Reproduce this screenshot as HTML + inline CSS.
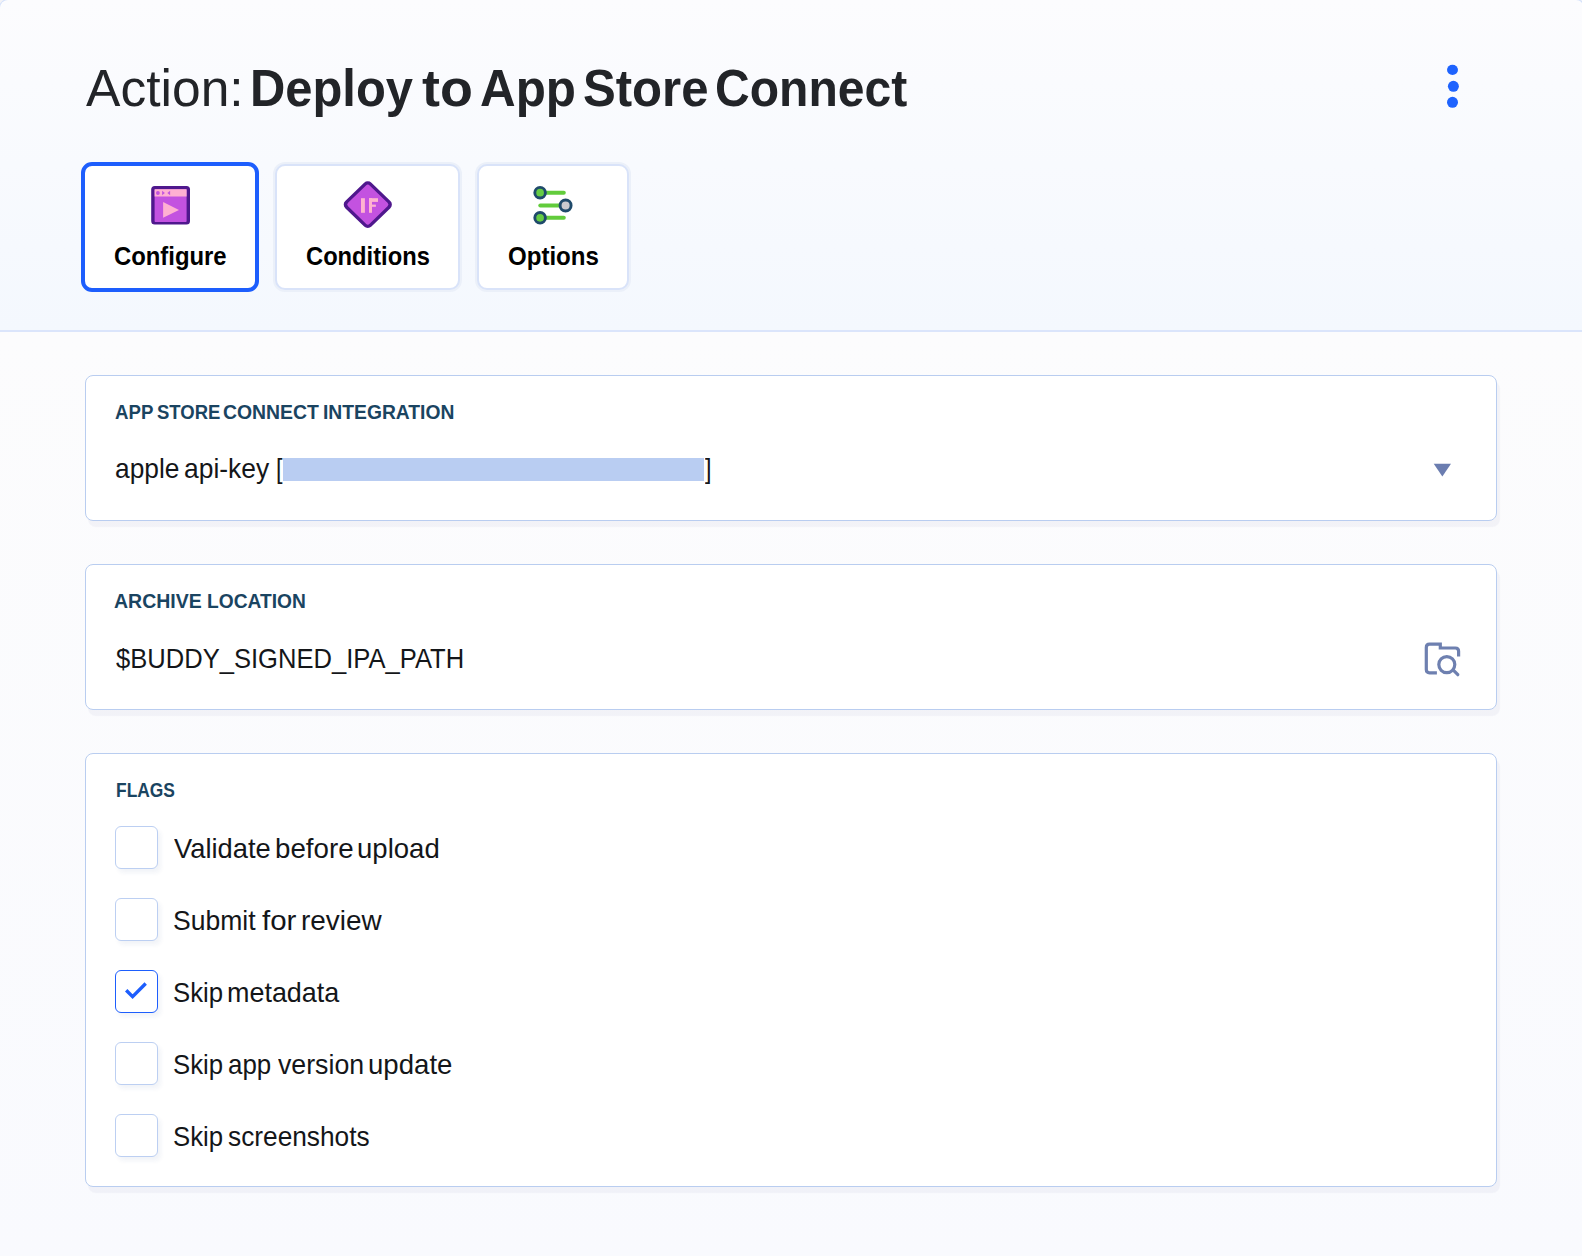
<!DOCTYPE html>
<html><head><meta charset="utf-8">
<style>
html,body{margin:0;padding:0;}
body{width:1582px;height:1256px;overflow:hidden;position:relative;background:#f3f3f6;font-family:"Liberation Sans",sans-serif;}
.abs{position:absolute;white-space:nowrap;transform-origin:0 0;}
#header{position:absolute;left:-1px;top:-1.5px;width:1584px;height:330px;box-sizing:content-box;background:linear-gradient(#fcfcfe,#f4f8fe);border:1.5px solid #d3e0fb;border-bottom:2px solid #dbe5fb;border-radius:9px 9px 0 0;}
#content{position:absolute;left:0;top:332px;width:1582px;height:924px;background:linear-gradient(#fcfcfd,#f9fafe);}
.title{font-size:52px;line-height:52px;color:#222428;}
.tab{position:absolute;box-sizing:border-box;background:#fff;border-radius:11px;}
.tab.sel{border:4px solid #1d5efd;}
.tab.un{border:2px solid #d9e3f9;box-shadow:0 0 0 2px #ebf0f9;border-radius:10px;}
.tablbl{font-weight:bold;font-size:26.5px;line-height:26.5px;color:#000;}
.card{position:absolute;left:85px;width:1412px;box-sizing:border-box;background:#fff;border:1px solid #b9cdf0;border-radius:8px;box-shadow:3px 6px 1px rgba(40,50,110,0.045);}
.lbl{font-weight:bold;font-size:20.5px;line-height:20.5px;color:#1a4461;}
.val{font-size:28px;line-height:28px;color:#141619;}
.cb{position:absolute;left:115px;width:43px;height:43px;box-sizing:border-box;border:1px solid #bccff2;border-radius:6px;background:#fff;box-shadow:3px 4px 4px rgba(40,60,130,0.06);}
.cb.on{border:1.3px solid #1d5efd;}
svg{position:absolute;left:0;top:0;}
</style></head>
<body>
<div id="header"></div>
<div id="content"></div>



<div class="tab sel" style="left:81px;top:162px;width:178px;height:130px"></div>
<div class="tab un" style="left:275px;top:164px;width:185px;height:126px"></div>
<div class="tab un" style="left:477px;top:164px;width:152px;height:126px"></div>


<div class="card" style="top:375px;height:146px"></div>
<div class="card" style="top:564px;height:146px"></div>
<div class="card" style="top:753px;height:434px"></div>

<div class="abs" style="left:283px;top:458px;width:421px;height:23px;background:#b9cdf2"></div>


<div class="cb" style="top:826px"></div>
<div class="cb" style="top:898px"></div>
<div class="cb on" style="top:970px"></div>
<div class="cb" style="top:1042px"></div>
<div class="cb" style="top:1114px"></div>

<!--TEXT-->
<div class="abs title" style="left:86.00px;top:62px;transform:scaleX(0.9916)">Action:</div>
<div class="abs title" style="left:250.28px;top:62px;font-weight:bold;transform:scaleX(0.9400)">Deploy</div>
<div class="abs title" style="left:421.97px;top:62px;font-weight:bold;transform:scaleX(1.0348)">to</div>
<div class="abs title" style="left:479.75px;top:62px;font-weight:bold;transform:scaleX(0.9490)">App</div>
<div class="abs title" style="left:583.11px;top:62px;font-weight:bold;transform:scaleX(0.9442)">Store</div>
<div class="abs title" style="left:715.15px;top:62px;font-weight:bold;transform:scaleX(0.9239)">Connect</div>
<div class="abs tablbl" style="left:114.20px;top:243px;transform:scaleX(0.9000)">Configure</div>
<div class="abs tablbl" style="left:305.61px;top:243px;transform:scaleX(0.8949)">Conditions</div>
<div class="abs tablbl" style="left:507.59px;top:243px;transform:scaleX(0.9082)">Options</div>
<div class="abs lbl" style="left:114.79px;top:402px;transform:scaleX(0.9098)">APP</div>
<div class="abs lbl" style="left:157.20px;top:402px;transform:scaleX(0.9015)">STORE</div>
<div class="abs lbl" style="left:223.15px;top:402px;transform:scaleX(0.9460)">CONNECT</div>
<div class="abs lbl" style="left:323.26px;top:402px;transform:scaleX(0.9406)">INTEGRATION</div>
<div class="abs val" style="left:114.76px;top:455px;transform:scaleX(0.9394)">apple</div>
<div class="abs val" style="left:184.36px;top:455px;transform:scaleX(0.9438)">api-key</div>
<div class="abs val" style="left:275.53px;top:455px;transform:scaleX(0.8333)">[</div>
<div class="abs val" style="left:704.80px;top:455px;transform:scaleX(0.8333)">]</div>
<div class="abs lbl" style="left:114.35px;top:591px;transform:scaleX(0.9500)">ARCHIVE</div>
<div class="abs lbl" style="left:206.66px;top:591px;transform:scaleX(0.9359)">LOCATION</div>
<div class="abs val" style="left:115.50px;top:645px;transform:scaleX(0.9132)">$BUDDY_SIGNED_IPA_PATH</div>
<div class="abs lbl" style="left:115.75px;top:780px;transform:scaleX(0.8485)">FLAGS</div>
<div class="abs val" style="left:173.50px;top:835px;transform:scaleX(0.9755)">Validate</div>
<div class="abs val" style="left:275.12px;top:835px;transform:scaleX(0.9895)">before</div>
<div class="abs val" style="left:357.43px;top:835px;transform:scaleX(0.9838)">upload</div>
<div class="abs val" style="left:172.55px;top:907px;transform:scaleX(0.9477)">Submit</div>
<div class="abs val" style="left:262.00px;top:907px;transform:scaleX(1.0531)">for</div>
<div class="abs val" style="left:300.71px;top:907px;transform:scaleX(0.9975)">review</div>
<div class="abs val" style="left:172.58px;top:979px;transform:scaleX(0.9189)">Skip</div>
<div class="abs val" style="left:227.38px;top:979px;transform:scaleX(0.9617)">metadata</div>
<div class="abs val" style="left:172.58px;top:1051px;transform:scaleX(0.9189)">Skip</div>
<div class="abs val" style="left:228.38px;top:1051px;transform:scaleX(0.9244)">app</div>
<div class="abs val" style="left:278.00px;top:1051px;transform:scaleX(0.9539)">version</div>
<div class="abs val" style="left:368.03px;top:1051px;transform:scaleX(0.9854)">update</div>
<div class="abs val" style="left:172.58px;top:1123px;transform:scaleX(0.9189)">Skip</div>
<div class="abs val" style="left:228.36px;top:1123px;transform:scaleX(0.9383)">screenshots</div>
<!--/TEXT-->
<svg width="1582" height="1256" viewBox="0 0 1582 1256">
  <!-- kebab -->
  <g fill="#1e63fe">
    <ellipse cx="1452.5" cy="69.8" rx="5.5" ry="5.1"/>
    <circle cx="1453.4" cy="86.3" r="5.5"/>
    <circle cx="1452.5" cy="102.3" r="5.5"/>
  </g>
  <!-- configure icon -->
  <rect x="151.2" y="186" width="38.8" height="38.6" rx="3.5" fill="#4f188d"/>
  <rect x="154.6" y="189.2" width="32" height="32.8" rx="0.8" fill="#c352e0"/>
  <rect x="154.6" y="189.2" width="32" height="7.3" fill="#ffb0d2"/>
  <circle cx="157.9" cy="193" r="1.9" fill="#c352e0"/>
  <polygon points="162.1,190.8 164.9,193 162.1,195.2" fill="#c352e0"/>
  <polygon points="170.1,190.8 167.3,193 170.1,195.2" fill="#c352e0"/>
  <polygon points="163.1,201.9 179,209.9 163.1,217.8" fill="#ffb0d2"/>
  <!-- conditions icon -->
  <g transform="translate(367.8 204.6) scale(1.03 1) translate(-367.8 -204.6)"><rect x="349.8" y="186.6" width="36" height="36" rx="5" fill="#4f188d" transform="rotate(45 367.8 204.6)"/>
  <rect x="353.0" y="189.8" width="29.6" height="29.6" rx="2.5" fill="#c352e0" transform="rotate(45 367.8 204.6)"/></g>
  <g fill="#ffb3d0">
    <rect x="361" y="198.2" width="3.9" height="14.6"/>
    <rect x="369" y="198.2" width="3" height="14.6"/>
    <rect x="369" y="198.2" width="9" height="3.7"/>
    <rect x="369" y="204.6" width="6.9" height="2.2"/>
  </g>
  <!-- options icon -->
  <g stroke="#62cc3c" stroke-width="4" stroke-linecap="round">
    <line x1="541" y1="192.7" x2="563.8" y2="192.7"/>
    <line x1="540.3" y1="205.5" x2="564" y2="205.5"/>
    <line x1="541" y1="217.8" x2="563.8" y2="217.8"/>
  </g>
  <g stroke="#1f4a6b" stroke-width="2.9">
    <circle cx="540.1" cy="192.7" r="5.3" fill="#66cc44"/>
    <circle cx="565.6" cy="205.5" r="5.5" fill="#cacace"/>
    <circle cx="540.1" cy="217.8" r="5.3" fill="#66cc44"/>
  </g>
  <!-- dropdown -->
  <polygon points="1433.7,463.7 1451,463.7 1442.35,476.6" fill="#6b7db0"/>
  <!-- folder search -->
  <g stroke="#6e80b0" stroke-width="3.2" fill="none">
    <path d="M1436.9,672.8 H1429.5 Q1426.3,672.8 1426.3,669.6 V647.4 Q1426.3,644.2 1429.5,644.2 H1440.3 V648 H1455.4 Q1458.6,648 1458.6,651.2 V656.5"/>
    <circle cx="1446.8" cy="664.6" r="8"/>
    <line x1="1453.3" y1="670.2" x2="1457.8" y2="674.7" stroke-linecap="round"/>
  </g>
  <!-- check -->
  <polyline points="126.2,990.2 132.6,996.6 145.7,983.5" fill="none" stroke="#1d5efd" stroke-width="3.4"/>
</svg>
</body></html>
